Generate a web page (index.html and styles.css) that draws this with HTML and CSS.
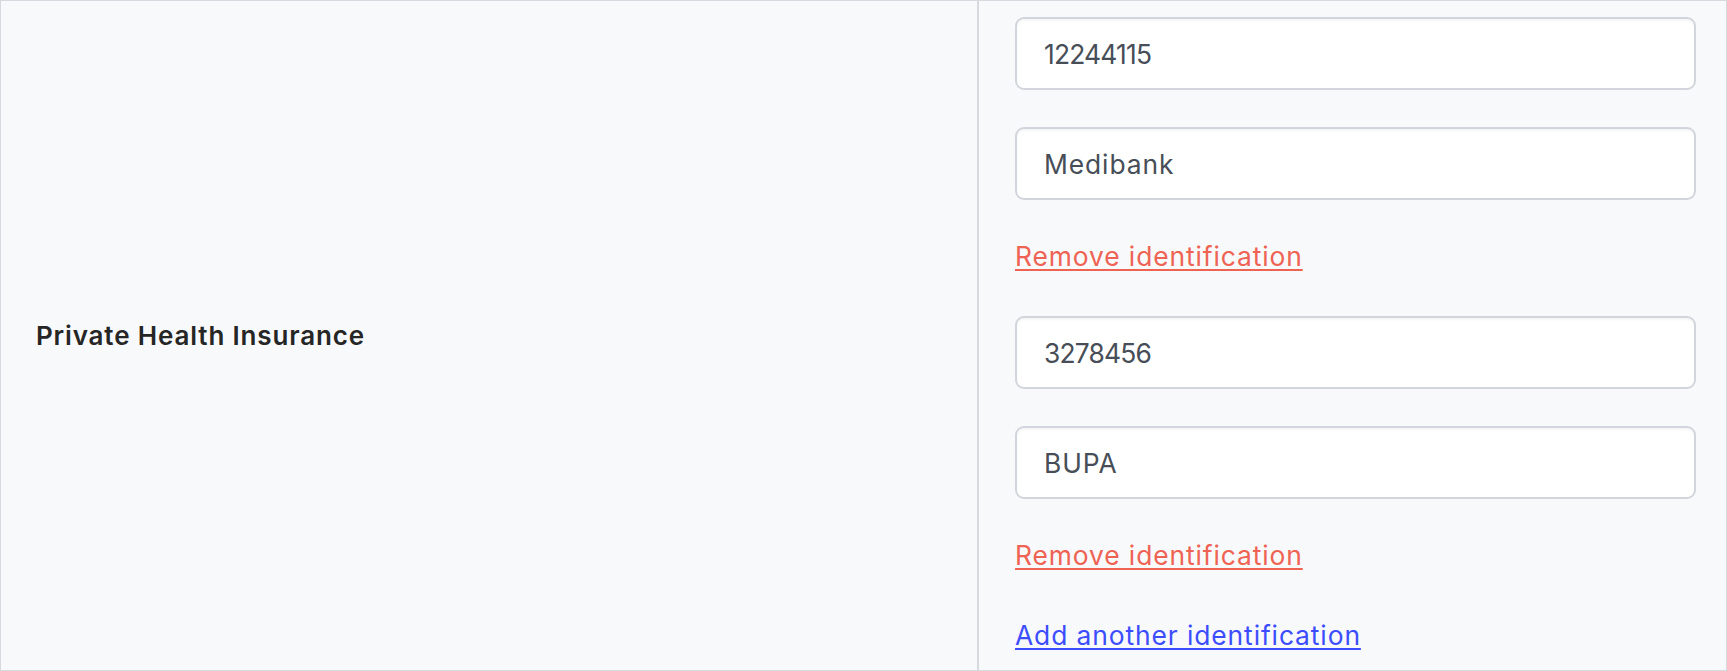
FILE: index.html
```html
<!DOCTYPE html>
<html lang="en">
<head>
<meta charset="utf-8">
<title>Private Health Insurance</title>
<link rel="stylesheet" href="styles.css">
</head>
<body>
<div class="row">
  <div class="label-col">
    <span class="label">Private Health Insurance</span>
  </div>
  <div class="field-col">
    <div class="input num">12244115</div>
    <div class="input gap">Medibank</div>
    <a class="link remove" href="#">Remove identification</a>
    <div class="input num after-link">3278456</div>
    <div class="input gap">BUPA</div>
    <a class="link remove" href="#">Remove identification</a>
    <a class="link add" href="#">Add another identification</a>
  </div>
</div>
</body>
</html>
```

FILE: styles.css
```css
html, body {
  margin: 0;
  padding: 0;
  background: #ffffff;
}
body {
  font-family: Inter, "Noto Sans", sans-serif;
  width: 1727px;
  height: 671px;
  overflow: hidden;
}
.row {
  box-sizing: border-box;
  width: 1727px;
  height: 671px;
  border: 1px solid #d6d9de;
  background: #f8f9fa;
  display: flex;
}
.label-col {
  box-sizing: border-box;
  width: 978px;
  flex: none;
  border-right: 2px solid #d6d9de;
  display: flex;
  align-items: center;
  padding-left: 35px;
}
.label {
  font-size: 26px;
  font-weight: 600;
  color: #262626;
  letter-spacing: 0.85px;
}
.field-col {
  flex: 1;
  display: flex;
  flex-direction: column;
  align-items: flex-start;
  padding: 16px 30px 0 36px;
  overflow: hidden;
}
.input {
  box-sizing: border-box;
  width: 100%;
  height: 73px;
  flex: none;
  border: 2px solid #d2d6dc;
  border-radius: 9px;
  background: #ffffff;
  box-shadow: inset 0 2px 2px rgba(0, 0, 0, 0.04);
  display: flex;
  align-items: center;
  padding-left: 27px;
  font-size: 26.4px;
  letter-spacing: 0.9px;
  color: #474e57;
}
.input.num {
  letter-spacing: -0.8px;
}
.input.gap {
  margin-top: 37px;
}
.input.after-link {
  margin-top: 44px;
}
.link {
  display: block;
  font-size: 26.4px;
  line-height: 32px;
  letter-spacing: 0.9px;
  text-decoration: underline;
  text-decoration-thickness: 2px;
  text-underline-offset: 3px;
}
.remove {
  color: #ee6354;
  margin-top: 40px;
}
.add {
  color: #3c4dff;
  margin-top: 48px;
}
```
